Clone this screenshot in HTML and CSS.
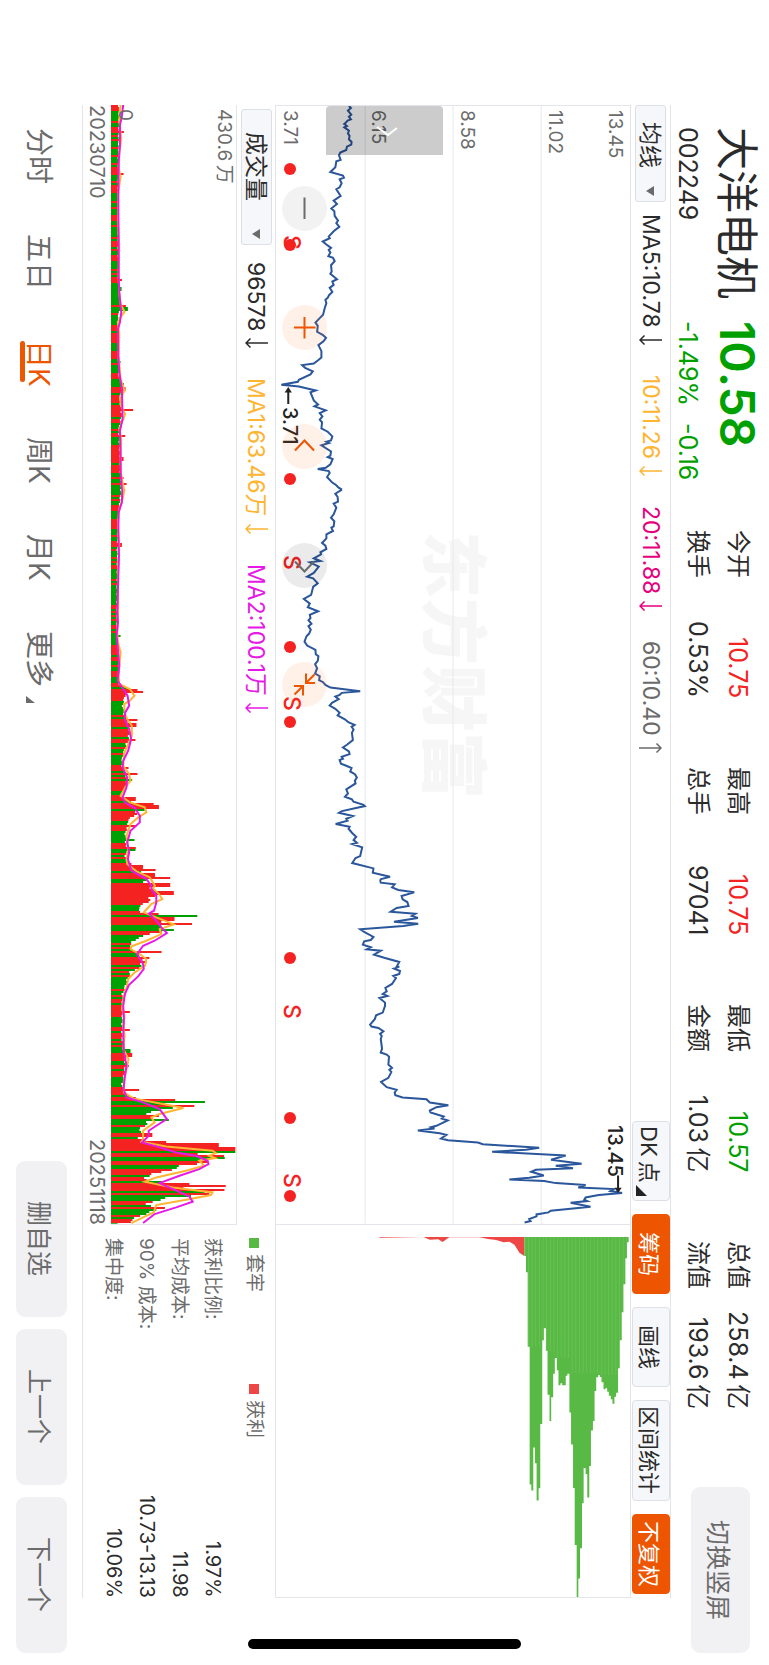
FILE: index.html
```html
<!DOCTYPE html>
<html lang="zh-CN">
<head>
<meta charset="utf-8">
<meta name="viewport" content="width=device-width, initial-scale=1">
<title>大洋电机 002249</title>
<link rel="stylesheet" href="styles.css">
</head>
<body>
<svg class="symbols" aria-hidden="true">
  <symbol id="arrow-down" viewBox="0 0 23 10"><path d="M23 5H1M5.500 0.500L1 5L5.500 9.500"/></symbol>
  <symbol id="arrow-up" viewBox="0 0 23 10"><path d="M0 5H22M17.500 0.500L22 5L17.500 9.500"/></symbol>
</svg>
<div class="page">
  <header class="header">
    <div class="identity">
      <h1 class="name">大洋电机</h1>
      <strong class="price">10.58</strong>
      <span class="code">002249</span>
      <span class="change"><span>-1.49%</span><span>-0.16</span></span>
    </div>
    <dl class="quotes">
      <div class="quote"><dt>今开</dt><dd class="up">10.75</dd></div>
      <div class="quote"><dt>换手</dt><dd>0.53%</dd></div>
      <div class="quote"><dt>最高</dt><dd class="up">10.75</dd></div>
      <div class="quote"><dt>总手</dt><dd>97041</dd></div>
      <div class="quote"><dt>最低</dt><dd class="down">10.57</dd></div>
      <div class="quote"><dt>金额</dt><dd>1.03&#8201;亿</dd></div>
      <div class="quote"><dt>总值</dt><dd>258.4&#8201;亿</dd></div>
      <div class="quote"><dt>流值</dt><dd>193.6&#8201;亿</dd></div>
    </dl>
    <button class="soft-button switch" type="button">切换竖屏</button>
  </header>

  <main class="workspace">
    <div class="toolbar">
      <div class="picker">
        <select class="picker-select" aria-label="主图指标"><option>均线</option></select>
        <svg class="caret" viewBox="0 0 8 10" aria-hidden="true"><path d="M8 0v10L0 5z"/></svg>
      </div>
      <div class="readings">
        <span class="reading">MA5:10.78<svg class="arrow" role="img" aria-label="下降"><use href="#arrow-down"/></svg></span>
        <span class="reading ma-yellow">10:11.26<svg class="arrow" role="img" aria-label="下降"><use href="#arrow-down"/></svg></span>
        <span class="reading ma-pink">20:11.88<svg class="arrow" role="img" aria-label="下降"><use href="#arrow-down"/></svg></span>
        <span class="reading ma-gray">60:10.40<svg class="arrow" role="img" aria-label="上升"><use href="#arrow-up"/></svg></span>
      </div>
      <div class="tools">
        <button class="tool tool-dk" type="button">DK&#8201;点<svg class="corner" viewBox="0 0 11 11" aria-hidden="true"><path d="M0 0v11h11z"/></svg></button>
        <button class="tool active" type="button">筹码</button>
        <button class="tool" type="button">画线</button>
        <button class="tool tool-wide" type="button">区间统计</button>
        <button class="tool active" type="button">不复权</button>
      </div>
    </div>

    <div class="upper">
      <section class="plot price-plot" aria-label="日K走势">
        <div class="watermark" aria-hidden="true">东方财富</div>
        <svg class="canvas" viewBox="16 48 1068 3356" preserveAspectRatio="none" aria-hidden="true">
          <path class="grid" d="M285 48V3404M550 48V3404M816 48V3404"/>
          <polyline class="trend" points="236,48 242,54 233,62 243,74 236,80 242,88 232,92 227,98 222,102 230,108 222,112 236,122 233,130 238,138 236,148 244,156 243,164 230,170 228,180 210,188 206,196 211,210 198,214 195,232 180,246 218,257 221,263 208,268 214,280 208,292 198,298 211,318 190,332 200,342 183,356 192,364 193,378 203,392 198,400 207,411 190,424 175,440 178,445 157,455 168,464 182,474 175,480 180,488 174,499 188,504 193,514 182,526 184,545 180,552 200,568 186,575 190,585 178,594 186,606 176,616 172,624 165,630 168,640 163,655 158,675 145,688 135,698 142,708 140,726 158,736 167,744 160,754 144,766 153,784 153,803 142,812 130,821 95,826 104,834 127,845 120,854 85,870 82,876 32,885 85,890 136,902 120,908 130,932 143,944 132,950 166,962 148,970 156,980 148,990 155,998 153,1016 172,1026 186,1040 182,1052 168,1056 176,1060 153,1067 182,1085 180,1098 172,1102 187,1108 180,1124 166,1134 142,1138 175,1144 178,1150 170,1162 185,1178 197,1186 205,1194 215,1200"/>
          <g transform="translate(0 1200)"><polyline class="trend" points="215,0 195,12 202,22 203,36 190,42 198,54 190,74 182,84 192,95 190,110 183,114 188,124 168,134 168,146 155,160 165,168 168,178 150,188 152,194 130,206 150,214 118,218 145,231 130,250 110,261 128,266 142,281 128,292 122,316 100,328 118,342 112,353 143,365 118,376 120,386 114,392 123,403 114,410 121,420 116,432 108,440 102,456 110,468 135,481 136,494 144,500 142,514 134,524 140,536 134,552 148,560 146,572 158,578 165,586 180,594 270,605 215,610 208,616 195,621 205,629 185,640 178,648 195,658 208,670 202,678 225,690 234,698 253,706 244,712 250,720 245,730 248,752 230,766 218,774 236,786 238,794 214,802 218,808 208,812 212,823 228,829 244,836 240,846 254,854 260,864 254,874 256,882 228,900 233,912 224,922 245,930 250,937 280,946 284,950 215,965 206,970 248,980 228,988 232,994 196,1004 238,1012 235,1018 245,1030 258,1042 250,1052 260,1060 246,1064 276,1074 270,1100 256,1106 246,1121 310,1137 308,1150 360,1162 330,1170"/></g>
          <g transform="translate(0 2370)"><polyline class="trend" points="330,0 332,10 374,15 366,24 385,32 433,39 395,50 398,60 412,68 416,80 380,86 362,97 437,103 426,110 444,116 372,127 445,133 400,140 270,150 282,158 310,173 302,182 282,186 278,196 302,204 290,210 332,214 312,226 345,236 388,248 380,262 388,262 372,268 390,275 388,284 370,290 378,296 366,314 346,326 350,336 338,344 352,350 328,356 345,370 345,380 338,400 318,408 314,420 300,436 304,442 325,446 340,456 330,464 335,470 332,480 336,508 332,520 350,526 357,532 355,556 366,566 358,572 364,578 355,596 333,608 350,624 380,632 374,640 376,648 398,655 470,660 480,670 536,678 500,684 480,694 482,700 522,712 516,718 534,724 500,740 484,744 494,748 444,754 510,762 530,767 514,778 535,783 625,790 640,795 810,806 770,812 668,818 890,829 846,842 938,854 860,860 912,867 800,872 786,878 824,889 780,896 720,901 825,906 860,912 950,918 928,925 1035,930 1025,936 1060,942 990,948 950,955 946,962 955,966 905,971 965,983 845,995 838,1000 802,1006 802,1012 780,1020 784,1026 766,1030"/></g>
          <path class="pointer" d="M53 943V905M1048 3259V3297"/>
          <path class="pointer-head" d="M42 908L53 892L64 908zM1037 3296L1048 3312L1059 3296z"/>
        </svg>
        <span class="axis" style="left:1%">3.71</span>
        <span class="axis" style="left:26%">6.15</span>
        <span class="axis" style="left:51%">8.58</span>
        <span class="axis" style="left:76%">11.02</span>
        <span class="axis" style="left:93%">13.45</span>
        <span class="extreme" style="left:1%;top:26.9%">3.71</span>
        <span class="extreme" style="left:93%;top:91.2%">13.45</span>
        <div class="marks" id="marks"></div>
        <button class="drawer" type="button" aria-label="展开"><svg viewBox="0 0 22 10" width="22" height="10" aria-hidden="true"><path d="M1 1L12 9L21 2"/></svg></button>
        <div class="rounds">
          <button class="round gray" type="button" aria-label="缩小"><svg viewBox="0 0 45 45" aria-hidden="true"><path d="M22.500 11.500V33"/></svg></button>
          <button class="round" type="button" aria-label="放大"><svg viewBox="0 0 45 45" aria-hidden="true"><path d="M22.500 12V33.500M12 22.500H33.500"/></svg></button>
          <button class="round" type="button" aria-label="左移"><svg viewBox="0 0 45 45" aria-hidden="true"><path d="M13 26.500L22.500 16.500L32 26.500"/></svg></button>
          <button class="round dark" type="button" aria-label="右移"><svg viewBox="0 0 45 45" aria-hidden="true"><path d="M13 18.500L22.500 28.500L32 18.500"/></svg></button>
          <button class="round" type="button" aria-label="收起"><svg viewBox="0 0 45 45" aria-hidden="true"><path d="M32.500 12.500L24 21M24 11.500V21H33M12.500 32.500L21 24M12 24H21V33.500"/></svg></button>
        </div>
      </section>

      <section class="plot chip-plot" aria-label="筹码分布">
        <svg class="canvas" viewBox="-255 15 1069 1117" preserveAspectRatio="none" aria-hidden="true">
          <defs><pattern id="stripe" width="11" height="20" patternUnits="userSpaceOnUse"><path class="stripe" d="M0 0H2V20H0z"/></pattern></defs>
          <path class="chip-red" d="M20 51H55L60 53L190 51L210 59L235 58L248 66L268 52H360L385 57L410 60L432 67L450 65L465 74L480 98L495 108V51z"/>
          <path class="chip-green" d="M495 51V108H500V157H505V380H511V794H516V812H522V683H527V730H532V842H538V805H543V612H549V361H554V325H560V392H565V524H571V603H576V532H582V461H587V414H593V451H598V496H604V490H609V496H620V467H625V461H631V578H636V674H642V804H647V975H653V1132H658V1076H663V985H669V850H674V744H680V762H685V833H691V738H696V632H702V603H707V513H712V472H718V465H723V471H728V487H734V508H739V505H745V515H750V527H756V538H761V551H767V530H772V518H778V445H783V361H789V277H794V193H800V115H805V67H810V51z"/>
          <path class="stripes" d="M495 51V108H500V157H505V380H549V361H554V325H560V392H587V414H631V460H718V465H778V445H783V361H789V277H794V193H800V115H805V67H810V51z"/>
        </svg>
      </section>
    </div>

    <div class="lower">
      <div class="volume">
        <div class="subbar">
          <div class="picker picker-volume">
            <select class="picker-select" aria-label="副图指标"><option>成交量</option></select>
            <svg class="caret" viewBox="0 0 8 10" aria-hidden="true"><path d="M8 0v10L0 5z"/></svg>
          </div>
          <div class="readings">
            <span class="reading">96578<svg class="arrow" role="img" aria-label="下降"><use href="#arrow-down"/></svg></span>
            <span class="reading ma-yellow">MA1:63.46万<svg class="arrow" role="img" aria-label="下降"><use href="#arrow-down"/></svg></span>
            <span class="reading ma-violet">MA2:100.1万<svg class="arrow" role="img" aria-label="下降"><use href="#arrow-down"/></svg></span>
          </div>
        </div>
        <section class="plot volume-plot" aria-label="成交量">
          <svg class="canvas" viewBox="333 48 378 3356" preserveAspectRatio="none" aria-hidden="true">
            <path class="bars-red" id="bars-red"/>
            <path class="bars-green" id="bars-green"/>
            <g class="line-yellow">
              <polyline points="362,48 358,90 362,130 364,150 358,190 357,240 362,262 355,310 354,400 358,470 356,560 358,610 362,645 374,668 362,685 354,700 358,735 356,800 362,870 374,905 360,930 366,955 376,975 366,1000 358,1020 364,1050 362,1110 364,1160 372,1200"/>
              <polyline transform="translate(0 1200)" points="374,0 368,30 358,60 354,100 358,170 354,250 355,350 352,430 354,460 362,490 356,560 358,585 390,600 404,620 390,635 373,645 374,670 382,690 396,710 396,740 385,765 372,795 370,830 388,855 392,875 376,895 362,920 390,940 435,955 440,970 415,985 392,1005 380,1040 385,1080 380,1110"/>
              <polyline transform="translate(0 2310)" points="380,0 382,15 410,37 450,55 466,80 460,88 478,105 488,120 455,135 432,160 470,175 523,196 480,210 485,225 440,245 395,262 392,270 420,285 440,300 436,320 405,340 385,360 380,385 370,420 366,450 374,470 370,500 374,530 370,570 386,600 378,640 372,670 372,700 400,718 490,735 552,747 480,765 455,775 465,790 430,815 430,840 425,848 500,862 640,875 650,882 630,890 648,897 600,905 615,920 560,935 470,955 435,968 520,985 640,1000 635,1008 560,1022 470,1038 462,1060 430,1075 395,1092"/>
            </g>
            <g class="line-violet">
              <polyline points="370,48 366,80 360,110 360,170 356,220 355,330 356,460 356,560 358,610 364,670 360,700 354,720 355,800 358,850 366,900 368,990 360,1025 362,1100 362,1150 366,1200"/>
              <polyline transform="translate(0 1200)" points="367,0 366,40 356,70 355,130 357,200 354,300 352,370 354,400 350,440 354,480 358,530 353,575 370,600 383,620 388,650 376,670 374,690 388,720 394,750 385,785 370,815 368,835 382,865 380,895 368,925 375,940 405,957 420,980 420,1000 392,1025 382,1060 388,1090 384,1110"/>
              <polyline transform="translate(0 2310)" points="384,0 395,35 440,60 455,80 455,92 470,110 470,130 463,155 448,163 470,185 485,205 502,222 465,245 430,260 412,285 430,315 432,330 415,352 387,378 375,405 370,440 372,480 370,530 372,580 380,620 375,650 371,690 380,715 430,730 480,750 502,780 470,800 447,815 447,830 427,850 480,865 530,880 590,890 625,905 628,915 600,930 540,950 480,972 520,990 570,1012 580,1028 530,1045 465,1065 430,1092"/>
            </g>
          </svg>
          <span class="axis" style="left:3%">0</span>
          <span class="axis" style="left:82%">430.6&#8201;万</span>
        </section>
        <div class="dates"><time datetime="2023-07-10">20230710</time><time datetime="2025-11-18">20251118</time></div>
      </div>

      <section class="chip-info">
        <div class="legend">
          <span class="legend-item"><i class="swatch swatch-green"></i>套牢</span>
          <span class="legend-item"><i class="swatch swatch-red"></i>获利</span>
        </div>
        <dl class="stats">
          <div class="stat"><dt>获利比例:</dt><dd>1.97%</dd></div>
          <div class="stat"><dt>平均成本:</dt><dd>11.98</dd></div>
          <div class="stat"><dt>90% 成本:</dt><dd>10.73-13.13</dd></div>
          <div class="stat"><dt>集中度:</dt><dd>10.06%</dd></div>
        </dl>
      </section>
    </div>
  </main>

  <footer class="footer">
    <nav class="tabs" aria-label="周期">
      <button class="tab" type="button">分时</button>
      <button class="tab" type="button">五日</button>
      <button class="tab current" type="button" aria-current="true">日K</button>
      <button class="tab" type="button">周K</button>
      <button class="tab" type="button">月K</button>
      <button class="tab" type="button">更多<svg class="more-corner" viewBox="0 0 9 7" aria-hidden="true"><path d="M0 0v7h9z"/></svg></button>
    </nav>
    <div class="actions">
      <button class="soft-button" type="button">删自选</button>
      <button class="soft-button" type="button">上一个</button>
      <button class="soft-button" type="button">下一个</button>
    </div>
  </footer>
  <div class="home-indicator" aria-hidden="true"></div>
</div>
<script src="charts.js"></script>
</body>
</html>
```

FILE: styles.css
```css
:root {
  --ink: #2b2b2b;
  --muted: #6b6b6b;
  --line: #e3e5ea;
  --red: #f52222;
  --green: #00a000;
  --orange: #ed5500;
  --yellow: #ffb432;
  --pink: #e6007e;
  --violet: #e619e6;
}

* { box-sizing: border-box; }

html { writing-mode: vertical-rl; text-orientation: sideways; }

body {
  margin: 0;
  background: #fff;
  color: var(--ink);
  font-family: "Inter", "Noto Sans CJK SC", sans-serif;
  font-size: 24px;
}

h1, dl, dd { margin: 0; font-weight: 400; }
i { font-style: normal; }

button, select {
  writing-mode: inherit;
  text-orientation: inherit;
  font: inherit;
  color: inherit;
  margin: 0;
  padding: 0;
  border: 0;
  background: none;
}

.symbols { position: absolute; width: 0; height: 0; }

.page {
  position: relative;
  display: flex;
  flex-direction: column;
  inline-size: 100vh;
  block-size: 100vw;
  overflow: hidden;
}

/* header */
.header {
  display: flex;
  align-items: center;
  padding-inline: 127px 12px;
}
.identity {
  display: grid;
  grid-template-columns: 194px 159px;
  grid-template-rows: 64px 34px;
}
.name { font-size: 43px; line-height: 64px; }
.price { font-size: 48px; line-height: 64px; font-weight: 600; color: var(--green); }
.code, .change { font-size: 25px; line-height: 34px; }
.change { display: flex; justify-content: space-between; color: var(--green); }
.quotes {
  flex: 1;
  display: grid;
  grid-auto-flow: column;
  grid-template-rows: 40px 40px;
  grid-auto-columns: 1fr;
  column-gap: 69px;
  margin-inline: 50px 78px;
  margin-block-start: 4px;
}
.quote { display: flex; justify-content: space-between; line-height: 40px; white-space: nowrap; }
.quote dd { font-size: 25px; }
.up { color: var(--red); }
.down { color: var(--green); }
.soft-button {
  inline-size: 156px;
  block-size: 51px;
  border-radius: 9px;
  background: #f1f1f4;
  color: var(--muted);
  font-size: 25px;
}
.switch { inline-size: 166px; block-size: 59px; }

/* workspace */
.workspace {
  flex: 1;
  min-block-size: 0;
  display: flex;
  flex-direction: column;
  margin-inline: 105px 67px;
  border-block: 1px solid var(--line);
}
.toolbar, .subbar { display: flex; align-items: center; }
.toolbar { block-size: 39px; }
.picker {
  position: relative;
  inline-size: 97px;
  block-size: 31px;
  border: 1px solid #dcdfe6;
  border-radius: 3px;
  background: #f6f7fa;
}
.picker-select {
  appearance: none;
  inline-size: 100%;
  block-size: 100%;
  padding-inline-start: 16px;
  font-size: 23px;
  line-height: 29px;
}
.caret {
  position: absolute;
  inset-inline-end: 5px;
  inset-block-end: 10px;
  width: 8px;
  height: 10px;
  fill: var(--muted);
}
.readings { display: flex; gap: 30px; margin-inline-start: 12px; font-size: 23px; line-height: 38px; }
.reading { display: flex; align-items: center; gap: 7px; }
.arrow { width: 23px; height: 10px; fill: none; stroke: currentColor; stroke-width: 1.5; }
.ma-yellow { color: var(--yellow); }
.ma-pink { color: var(--pink); }
.ma-gray { color: var(--muted); }
.ma-violet { color: var(--violet); }
.tools { display: flex; gap: 13px; margin-inline: auto 4px; font-size: 22px; }
.tool {
  position: relative;
  inline-size: 80px;
  block-size: 38px;
  border: 1px solid #dcdfe6;
  border-radius: 4px;
  background: #f6f7fa;
  white-space: nowrap;
}
.tool-wide { inline-size: 101px; }
.tool.active { border-color: var(--orange); background: var(--orange); color: #fff; }
.tool-dk { padding-inline-end: 14px; }
.corner { position: absolute; left: 3px; bottom: 4px; width: 11px; height: 11px; fill: #222; }

.upper, .lower { display: grid; grid-template-columns: 3fr 1fr; }
.upper { flex: 1; min-block-size: 0; border-block: 1px solid var(--line); }
.plot { position: relative; border-inline: 1px solid var(--line); }
.chip-plot { border-inline-start: 0; }
.canvas { position: absolute; inset: 0; width: 100%; height: 100%; writing-mode: horizontal-tb; }
.canvas * { vector-effect: non-scaling-stroke; }
.grid { fill: none; stroke: #e4e8ee; stroke-width: 1px; }
.trend { fill: none; stroke: #2a569b; stroke-width: 2px; stroke-linejoin: miter; }
.pointer { stroke: #222; stroke-width: 2px; }
.pointer-head { fill: #222; }
.chip-red { fill: #ee4545; }
.chip-green { fill: #58b944; }
.stripe { fill: #79c967; }
.stripes { fill: url(#stripe); opacity: 0.7; }
.watermark {
  position: absolute;
  inset: 0;
  display: flex;
  align-items: center;
  justify-content: center;
  font-size: 67px;
  font-weight: 900;
  line-height: 70px;
  color: #f6f6f6;
}
.axis { position: absolute; top: 4px; font-size: 19px; line-height: 20px; color: var(--muted); white-space: nowrap; }
.extreme { position: absolute; font-size: 20px; line-height: 20px; font-weight: 500; color: #222; }
.marks { position: absolute; inset: 0; color: var(--red); }
.dot { position: absolute; left: 8px; width: 12px; height: 12px; margin-top: -6px; border-radius: 50%; background: var(--red); }
.sell { position: absolute; left: 4px; height: 16px; margin-top: -8px; font-size: 23px; line-height: 24px; font-weight: 500; }
.drawer {
  position: absolute;
  top: 0;
  left: 14%;
  width: 117px;
  height: 49px;
  border-radius: 4px 4px 0 0;
  background: rgba(0, 0, 0, 0.2);
}
.drawer svg { fill: none; stroke: #fff; stroke-width: 2; }
.rounds { position: absolute; left: 6px; top: 80px; display: flex; gap: 74px; }
.round { inline-size: 45px; block-size: 45px; border-radius: 50%; background: rgba(255, 110, 30, 0.1); }
.round svg { display: block; width: 45px; height: 45px; fill: none; stroke: var(--orange); stroke-width: 2; }
.round.gray { background: rgba(0, 0, 0, 0.05); }
.round.dark { background: rgba(0, 0, 0, 0.08); }
.round.gray svg, .round.dark svg { stroke: var(--muted); }

/* volume */
.volume { display: flex; flex-direction: column; }
.subbar { block-size: 38px; padding-inline-start: 4px; }
.picker-volume { inline-size: 136px; }
.picker-volume .picker-select { padding-inline-start: 22px; }
.subbar .readings { margin-inline-start: 17px; }
.volume-plot { block-size: 126px; border-block-start: 1px solid var(--line); border-inline-start: 0; }
.bars-red { fill: var(--red); }
.bars-green { fill: var(--green); }
.line-yellow, .line-violet { fill: none; stroke-width: 2px; }
.line-yellow { stroke: var(--yellow); }
.line-violet { stroke: var(--violet); }
.dates { display: flex; justify-content: space-between; font-size: 20px; line-height: 28px; color: var(--muted); }

/* chip summary */
.chip-info { padding-inline-start: 13px; font-size: 19px; }
.legend { display: grid; grid-template-columns: 146px auto; line-height: 42px; color: var(--muted); }
.legend-item { display: flex; align-items: center; gap: 6px; }
.swatch { inline-size: 10px; block-size: 10px; }
.swatch-green { background: #58b944; }
.swatch-red { background: #ee4545; }
.stats { margin-block-start: 4px; line-height: 33px; }
.stat { display: flex; justify-content: space-between; }
.stat dt { color: var(--muted); }
.stat dd { font-size: 20px; }

/* footer */
.footer {
  display: flex;
  align-items: center;
  justify-content: space-between;
  block-size: 82px;
  padding-inline: 128px 12px;
}
.tabs { display: flex; gap: 50px; margin-block-start: 4px; font-size: 28px; line-height: 42px; color: var(--muted); }
.tab { position: relative; }
.current { color: var(--orange); }
.current::after {
  content: "";
  position: absolute;
  inset-block-end: 2px;
  inset-inline: 1px 5px;
  block-size: 5px;
  border-radius: 3px;
  background: var(--orange);
}
.more-corner { position: absolute; left: 8px; top: 65px; width: 9px; height: 7px; fill: var(--muted); }
.actions { display: flex; gap: 12px; }
.home-indicator {
  position: absolute;
  left: 32.2%;
  right: 32.2%;
  bottom: 16px;
  height: 10px;
  border-radius: 5px;
  background: #000;
}
```

FILE: charts.js
```js
// Volume history. y runs along the time axis, lengths are measured from the baseline.
// base: [y, length] outline; peaks: [y, length, colour]; runs: alternating red/green bar counts.
const BAR = 6;
const sections = [
  {
    start: 48, end: 1200,
    base: [[48, 24], [120, 24], [300, 21], [500, 22], [640, 27], [700, 20], [860, 24], [890, 34], [930, 26], [975, 34], [1020, 24], [1200, 32]],
    peaks: [[127, 39, "r"], [255, 38, "r"], [572, 33, "r"], [600, 32, "g"], [651, 45, "r"], [660, 51, "g"], [735, 27, "r"], [820, 29, "g"], [885, 39, "g"], [900, 44, "r"], [965, 67, "r"], [1040, 43, "r"], [1110, 38, "r"], [1168, 38, "r"], [1186, 47, "r"]],
    runs: "3 5 1 2 3 1 1 1 1 3 1 3 1 3 1 1 4 3 1 1 4 4 1 2 1 3 3 2 1 5 1 1 3 1 1 2 3 4 1 1 1 1 3 2 1 8 1 1 1 1 1 5 3 2 4 4 4 2 1 4 3 5 2 1 4 1 6 1 2 3 1 1 2 4 6 2 1 1 4 9 6"
  },
  {
    start: 1200, end: 2310,
    base: [[1200, 32], [1260, 24], [1300, 20], [1560, 18], [1640, 18], [1700, 25], [1780, 24], [1797, 50], [1825, 42], [1850, 36], [1890, 46], [1900, 56], [1950, 56], [1980, 42], [2020, 32], [2050, 40], [2085, 50], [2120, 30], [2150, 80], [2175, 78], [2195, 52], [2240, 44], [2300, 46], [2310, 50]],
    peaks: [[1368, 33, "r"], [1643, 29, "g"], [1802, 80, "r"], [1808, 97, "r"], [1895, 80, "r"], [1908, 77, "r"], [1954, 74, "r"], [2037, 53, "r"], [2055, 80, "r"], [2072, 64, "g"], [2130, 75, "r"], [2145, 129, "r"], [2154, 145, "r"], [2163, 102, "g"], [2213, 77, "r"], [2254, 71, "g"], [2276, 75, "r"], [2283, 74, "g"]],
    runs: "0 3 1 1 1 2 3 4 5 3 1 2 2 2 1 3 1 1 1 1 2 5 1 1 1 10 2 1 1 1 1 1 1 2 2 1 1 1 1 4 5 1 2 2 1 2 3 3 2 1 1 1 4 7 1 1 4 1 4 1 2 2 1 2 1 5 3 1 1 1 1 1 5 2 1 7 5 3 2 4 1 1 4 1 1 1 3 1 1 4"
  },
  {
    start: 2310, end: 3404,
    base: [[2310, 48], [2335, 70], [2360, 105], [2395, 110], [2410, 180], [2425, 125], [2440, 112], [2460, 80], [2475, 110], [2495, 150], [2525, 170], [2545, 85], [2570, 56], [2600, 90], [2630, 98], [2650, 60], [2680, 48], [2715, 36], [2850, 34], [2890, 46], [2950, 42], [2990, 34], [3020, 50], [3032, 110], [3052, 190], [3070, 120], [3095, 120], [3120, 92], [3150, 82], [3162, 160], [3180, 300], [3200, 270], [3220, 290], [3235, 210], [3255, 135], [3270, 90], [3283, 200], [3300, 250], [3313, 290], [3328, 160], [3345, 115], [3365, 135], [3380, 90], [3395, 64], [3404, 20]],
    peaks: [[2334, 97, "r"], [2340, 135, "r"], [2358, 133, "r"], [2364, 179, "r"], [2388, 179, "r"], [2412, 190, "r"], [2417, 183, "g"], [2475, 144, "r"], [2482, 261, "g"], [2490, 192, "r"], [2506, 245, "r"], [2523, 190, "g"], [2587, 153, "r"], [2605, 116, "r"], [2618, 108, "r"], [2770, 57, "r"], [2822, 57, "r"], [2886, 59, "g"], [2898, 64, "r"], [2933, 54, "r"], [3003, 85, "r"], [3025, 75, "r"], [3031, 194, "r"], [3039, 284, "g"], [3051, 252, "r"], [3057, 187, "g"], [3082, 145, "r"], [3092, 175, "g"], [3138, 125, "r"], [3160, 167, "r"], [3168, 326, "r"], [3180, 376, "r"], [3186, 376, "g"], [3193, 262, "r"], [3202, 342, "r"], [3209, 344, "g"], [3283, 237, "r"], [3292, 347, "r"], [3304, 343, "r"], [3313, 297, "r"], [3319, 242, "g"], [3328, 164, "g"], [3356, 163, "r"], [3365, 137, "g"], [3398, 60, "r"]],
    runs: "0 2 4 2 1 4 3 2 5 3 1 1 1 2 2 2 3 4 1 1 1 1 1 2 4 1 1 1 1 1 1 6 1 2 1 1 2 1 3 1 2 5 2 1 3 1 1 1 1 1 2 2 2 2 2 1 3 5 4 1 3 2 1 4 2 2 1 3 1 2 2 2 5 2 2 2 3 1 2 1 3 2 3 1 2 1 1 3 1 1 2 3 1 1 2 1"
  }
];

function lengthAt(base, y) {
  for (let i = 1; i < base.length; i++) {
    const [y0, a] = base[i - 1];
    const [y1, b] = base[i];
    if (y <= y1) return a + (b - a) * (y - y0) / (y1 - y0);
  }
  return base[base.length - 1][1];
}

const paths = { r: "", g: "" };
sections.forEach(({ start, end, base, peaks, runs }) => {
  const colours = [];
  runs.split(" ").forEach((n, i) => {
    for (let k = 0; k < Number(n); k++) colours.push(i % 2 ? "g" : "r");
  });
  for (let i = 0, y = start; y < end; i++, y += BAR) {
    const peak = peaks.find(p => Math.abs(p[0] - y - BAR / 2) <= BAR / 2);
    const ripple = 0.88 + 0.14 * Math.abs(Math.sin(i * 2.3));
    const length = peak ? peak[1] : Math.round(lengthAt(base, y + BAR / 2) * ripple);
    const colour = peak ? peak[2] : colours[i] || "g";
    paths[colour] += `M333 ${y}h${length}v${Math.min(BAR, end - y)}H333z`;
  }
});
document.getElementById("bars-red").setAttribute("d", paths.r);
document.getElementById("bars-green").setAttribute("d", paths.g);

// Signal marks along the price chart, as a share of the time axis.
const marks = document.getElementById("marks");
const addMark = (cls, text) => share => {
  const el = document.createElement("span");
  el.className = cls;
  el.textContent = text;
  el.style.top = share + "%";
  marks.append(el);
};
[12.3, 40.9, 53.5, 81.1, 96.2].forEach(addMark("sell", "S"));
[5.6, 12.4, 33.4, 48.4, 55.1, 76.2, 90.5, 97.5].forEach(addMark("dot", ""));
```
